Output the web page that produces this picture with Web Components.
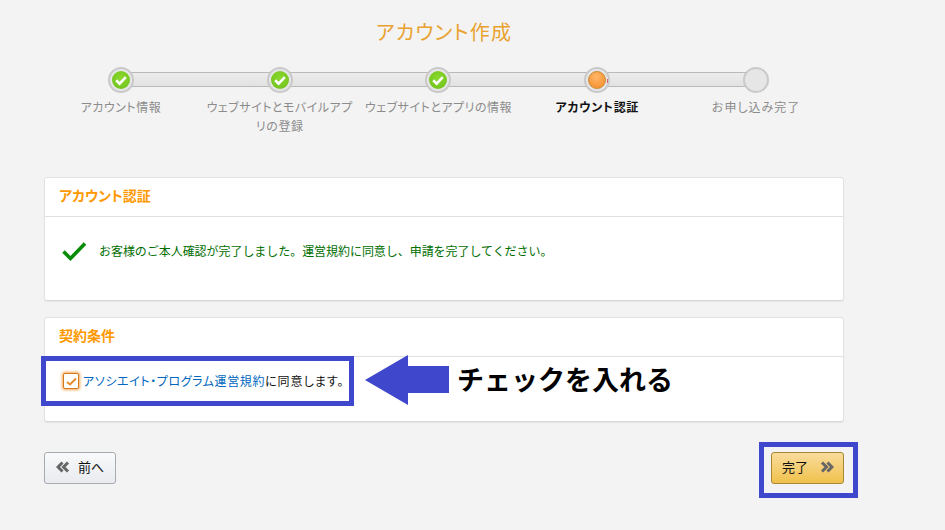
<!DOCTYPE html>
<html lang="ja">
<head>
<meta charset="utf-8">
<title>アカウント作成</title>
<style>
  html, body { margin: 0; padding: 0; background: #f3f3f3; }
  body { font-family: "Noto Sans CJK JP", "Liberation Sans", sans-serif; font-feature-settings: "palt"; }
</style>
</head>
<body>
<signup-page>
  <step-bar>
    <step-item state="done">アカウント情報</step-item>
    <step-item state="done">ウェブサイトとモバイルアプリの登録</step-item>
    <step-item state="done">ウェブサイトとアプリの情報</step-item>
    <step-item state="active">アカウント認証</step-item>
    <step-item style="--label-spacing: 1px">お申し込み完了</step-item>
  </step-bar>

  <panel-card heading="アカウント認証" class="verify">
    <verify-message>お客様のご本人確認が完了しました。運営規約に同意し、申請を完了してください。</verify-message>
  </panel-card>

  <panel-card heading="契約条件" class="terms">
    <terms-check></terms-check>
  </panel-card>

  <form-actions>
    <nav-button slot="prev" dir="prev">前へ</nav-button>
    <nav-button slot="next" dir="next" primary>完了</nav-button>
  </form-actions>

  <call-out></call-out>
</signup-page>

<script>
const pageTemplate = document.createElement('template');
pageTemplate.innerHTML = `
  <style>
    :host {
      display: block;
      position: relative;
      width: 945px;
      height: 530px;
      box-sizing: border-box;
      padding: 17px 101px 0 44px;
      overflow: hidden;
    }
    h1 {
      margin: 0 0 20px;
      height: 30px;
      font-size: 20px;
      line-height: 30px;
      font-weight: 400;
      color: #e9a22f;
      text-align: center;
      letter-spacing: 1.1px;
    }
    ::slotted(panel-card) { margin-bottom: 16px; }
  </style>
  <h1>アカウント作成</h1>
  <slot></slot>
`;

class SignupPage extends HTMLElement {
  constructor() {
    super();
    this.attachShadow({ mode: 'open' });
    this.shadowRoot.appendChild(pageTemplate.content.cloneNode(true));
  }
}

const stepBarTemplate = document.createElement('template');
stepBarTemplate.innerHTML = `
  <style>
    :host {
      display: grid;
      grid-template-columns: repeat(5, 158.8px);
      position: relative;
      margin: 0 0 46px -2.5px;
      height: 64px;
    }
    .track {
      position: absolute;
      left: 79px;
      width: 640px;
      top: 5px;
      height: 13px;
      border-top: 1px solid #b9b9b9;
      border-bottom: 1px solid #b9b9b9;
      background: linear-gradient(#ececec, #e2e2e2);
    }
  </style>
  <div class="track"></div>
  <slot></slot>
`;

class StepBar extends HTMLElement {
  constructor() {
    super();
    this.attachShadow({ mode: 'open' });
    this.shadowRoot.appendChild(stepBarTemplate.content.cloneNode(true));
  }
}

const stepItemTemplate = document.createElement('template');
stepItemTemplate.innerHTML = `
  <style>
    :host {
      display: flex;
      flex-direction: column;
      align-items: center;
      position: relative;
      text-align: center;
      font-size: 12px;
      line-height: 19px;
      color: #8c8c8c;
      letter-spacing: var(--label-spacing, .5px);
    }
    :host([state="active"]) { color: #111; font-weight: 700; letter-spacing: .7px; }
    .dot {
      position: relative;
      width: 26px;
      height: 26px;
      box-sizing: border-box;
      border-radius: 50%;
      border: 2px solid #c9c9c9;
      background: #e6e6e6;
      display: flex;
      align-items: center;
      justify-content: center;
      margin-bottom: 4px;
      flex: none;
    }
    .fill { display: none; width: 18px; height: 18px; border-radius: 50%; }
    :host([state="done"]) .fill {
      display: block;
      background: radial-gradient(circle at 50% 40%, #8ad92d, #6ebf1c);
    }
    :host([state="active"]) .fill {
      display: block;
      border: 1px solid #c98a35;
      box-sizing: border-box;
      background: radial-gradient(circle at 45% 30%, #ffb668, #f58a25);
    }
    :host([state="active"]) .dot::after {
      content: '';
      position: absolute;
      left: 21px;
      top: 10px;
      width: 1px;
      height: 4px;
      background: #d9606a;
    }
    svg { display: none; }
    :host([state="done"]) svg { display: block; }
    .label { width: 149px; }
  </style>
  <div class="dot">
    <div class="fill">
      <svg width="18" height="18" viewBox="0 0 18 18"><path d="M4.200 9.300 7.600 12.600 13.800 6.200" fill="none" stroke="#fff" stroke-width="2.600"/></svg>
    </div>
  </div>
  <div class="label"><slot></slot></div>
`;

class StepItem extends HTMLElement {
  constructor() {
    super();
    this.attachShadow({ mode: 'open' });
    this.shadowRoot.appendChild(stepItemTemplate.content.cloneNode(true));
  }
}

const panelTemplate = document.createElement('template');
panelTemplate.innerHTML = `
  <style>
    :host {
      display: block;
      width: 800px;
      box-sizing: border-box;
      background: #fff;
      border-radius: 3px;
      border: 1px solid #e2e2e2;
      border-bottom-color: #d8d8d8;
      box-shadow: 0 1px 1px rgba(0,0,0,.06);
    }
    :host(.verify) { height: 124px; }
    :host(.terms) { height: 105px; }
    header {
      height: 39px;
      box-sizing: border-box;
      padding: 0 14px;
      border-bottom: 1px solid #e0e0e0;
      font-size: 14px;
      line-height: 35px;
      font-weight: 700;
      color: #f90;
    }
  </style>
  <header></header>
  <slot></slot>
`;

class PanelCard extends HTMLElement {
  constructor() {
    super();
    this.attachShadow({ mode: 'open' });
    this.shadowRoot.appendChild(panelTemplate.content.cloneNode(true));
    this.shadowRoot.querySelector('header').textContent = this.getAttribute('heading');
  }
}

const verifyTemplate = document.createElement('template');
verifyTemplate.innerHTML = `
  <style>
    :host {
      display: flex;
      align-items: center;
      gap: 12px;
      padding: 22px 0 0 16px;
      font-size: 12px;
      line-height: 24px;
      color: #006d00;
      font-feature-settings: normal;
      letter-spacing: -.05px;
    }
    svg { flex: none; }
  </style>
  <svg width="26" height="22" viewBox="0 0 26 22"><path d="M2.500 11.500 9.500 18.500 24 3.500" fill="none" stroke="#078c07" stroke-width="3.600"/></svg>
  <span><slot></slot></span>
`;

class VerifyMessage extends HTMLElement {
  constructor() {
    super();
    this.attachShadow({ mode: 'open' });
    this.shadowRoot.appendChild(verifyTemplate.content.cloneNode(true));
  }
}

const termsTemplate = document.createElement('template');
termsTemplate.innerHTML = `
  <style>
    :host {
      display: flex;
      align-items: center;
      gap: 4px;
      padding: 15px 0 0 18px;
      font-size: 12px;
      line-height: 18px;
      color: #111;
    }
    .box {
      width: 16px;
      height: 16px;
      box-sizing: border-box;
      border: 1px solid #d4791c;
      border-radius: 2px;
      background: #fff;
      box-shadow: 0 0 3px 1px #f5a556;
      display: flex;
      align-items: center;
      justify-content: center;
      flex: none;
    }
    a { color: #0066c0; text-decoration: none; letter-spacing: .6px; }
    .rest { letter-spacing: 1px; }
  </style>
  <span class="box">
    <svg width="11" height="9" viewBox="0 0 11 9"><path d="M1 5 4 7.500 10 1.500" fill="none" stroke="#e98a2c" stroke-width="2"/></svg>
  </span>
  <span><a href="#">アソシエイト・プログラム運営規約</a><span class="rest">に同意します。</span></span>
`;

class TermsCheck extends HTMLElement {
  constructor() {
    super();
    this.attachShadow({ mode: 'open' });
    this.shadowRoot.appendChild(termsTemplate.content.cloneNode(true));
  }
}

const actionsTemplate = document.createElement('template');
actionsTemplate.innerHTML = `
  <style>
    :host {
      display: flex;
      justify-content: space-between;
      width: 800px;
      margin-top: 30px;
    }
  </style>
  <slot name="prev"></slot>
  <slot name="next"></slot>
`;

class FormActions extends HTMLElement {
  constructor() {
    super();
    this.attachShadow({ mode: 'open' });
    this.shadowRoot.appendChild(actionsTemplate.content.cloneNode(true));
  }
}

const buttonTemplate = document.createElement('template');
buttonTemplate.innerHTML = `
  <style>
    :host {
      display: flex;
      align-items: center;
      gap: 8px;
      height: 32px;
      width: 72px;
      box-sizing: border-box;
      padding: 0 0 2px 11px;
      border: 1px solid #a8abb2;
      border-radius: 3px;
      background: linear-gradient(#f8f9fa, #e9ebef);
      font-size: 13px;
      font-feature-settings: normal;
      color: #111;
    }
    :host([primary]) {
      width: 73px;
      gap: 12px;
      padding-left: 10px;
      border-color: #a88734;
      background: linear-gradient(#f9dc9d, #f0c14b);
    }
    svg { flex: none; }
    span { margin-bottom: 2px; }
    :host([dir="next"]) svg { order: 1; }
  </style>
  <svg width="14" height="12" viewBox="0 0 14 12"><path d="M6.500 1.500 2 6 6.500 10.500M12 1.500 7.500 6 12 10.500" fill="none" stroke="#666" stroke-width="3"/></svg>
  <span><slot></slot></span>
`;

class NavButton extends HTMLElement {
  constructor() {
    super();
    this.attachShadow({ mode: 'open' });
    this.shadowRoot.appendChild(buttonTemplate.content.cloneNode(true));
    if (this.getAttribute('dir') === 'next')
      this.shadowRoot.querySelector('path').setAttribute('transform', 'translate(14 0) scale(-1 1)');
  }
}

// hand drawn annotation on top of the page
const calloutTemplate = document.createElement('template');
calloutTemplate.innerHTML = `
  <style>
    :host { display: contents; font-feature-settings: normal; }
    .frame {
      position: absolute;
      box-sizing: border-box;
      border: 5px solid #3f48cc;
    }
    .terms { left: 41px; top: 356px; width: 313px; height: 50px; }
    .done { left: 759px; top: 442px; width: 99px; height: 56px; }
    svg { position: absolute; left: 365px; top: 355px; }
    .note {
      position: absolute;
      left: 457px;
      top: 359px;
      font-size: 27px;
      line-height: 40px;
      font-weight: 700;
      color: #000;
      white-space: nowrap;
    }
  </style>
  <div class="frame terms"></div>
  <div class="frame done"></div>
  <svg width="84" height="50" viewBox="0 0 84 50"><path d="M0 25 43 0V11H84V38H43V50Z" fill="#3f48cc"/></svg>
  <div class="note">チェックを入れる</div>
`;

class CallOut extends HTMLElement {
  constructor() {
    super();
    this.attachShadow({ mode: 'open' });
    this.shadowRoot.appendChild(calloutTemplate.content.cloneNode(true));
  }
}

customElements.define('signup-page', SignupPage);
customElements.define('step-bar', StepBar);
customElements.define('step-item', StepItem);
customElements.define('panel-card', PanelCard);
customElements.define('verify-message', VerifyMessage);
customElements.define('terms-check', TermsCheck);
customElements.define('form-actions', FormActions);
customElements.define('nav-button', NavButton);
customElements.define('call-out', CallOut);
</script>
</body>
</html>
